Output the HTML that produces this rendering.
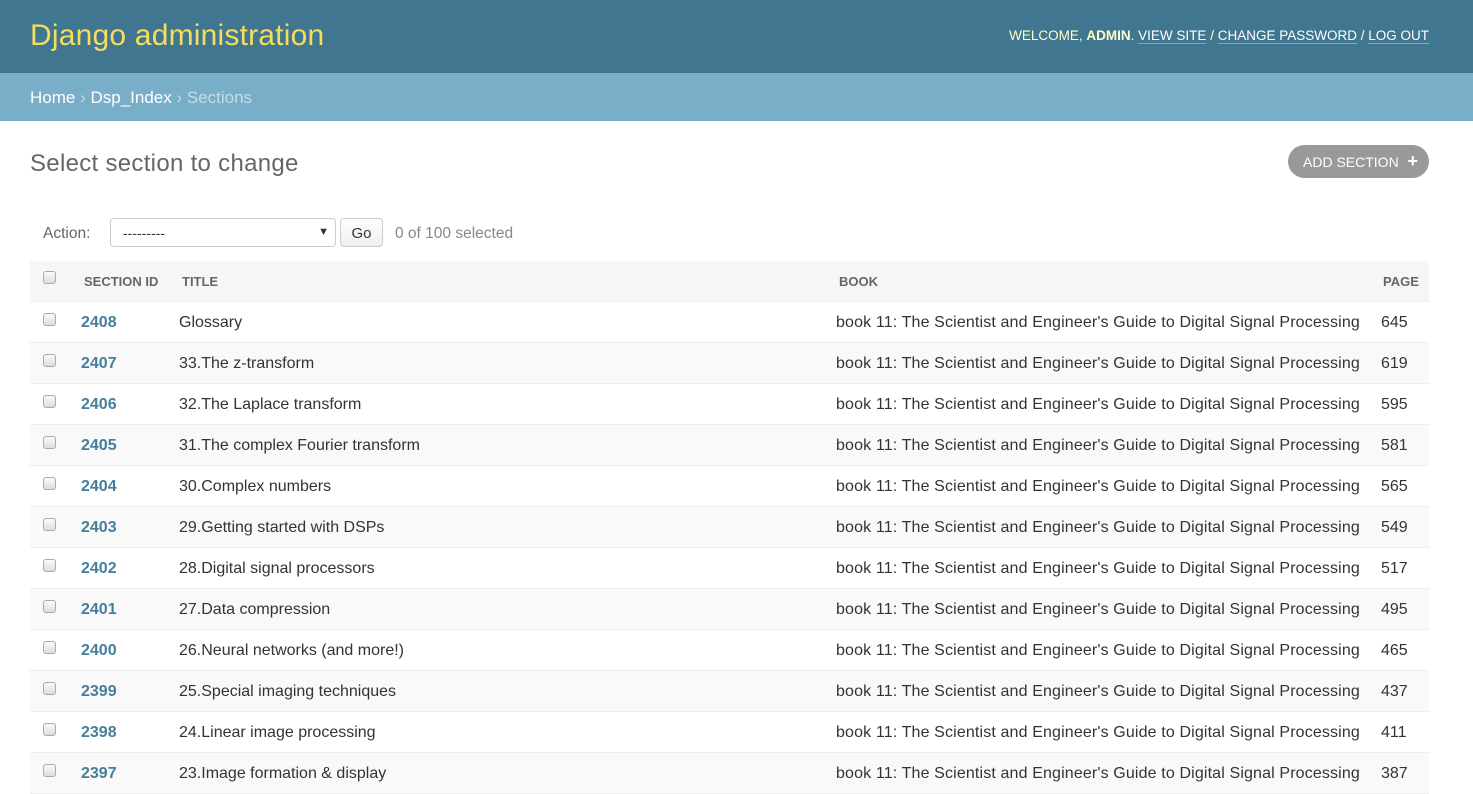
<!DOCTYPE html>
<html><head><meta charset="utf-8"><style>
*{box-sizing:border-box}
body{margin:0;width:1473px;height:777px;overflow:hidden;background:#fff;font-family:"Liberation Sans",Arial,sans-serif;color:#333;position:relative}
.hdr{position:absolute;left:0;top:0;width:1473px;height:73px;background:#417690}
.brand{position:absolute;left:30px;top:19px;font-size:30px;color:#f5dd5d;font-weight:normal;letter-spacing:0.2px}
.tools{position:absolute;right:44px;top:28px;font-size:13.5px;color:#ffc;letter-spacing:0}
.tools a{color:#fff;border-bottom:1px solid rgba(255,255,255,.35);text-decoration:none}
.tools b{color:#ffc}
.bc{position:absolute;left:0;top:73px;width:1473px;height:48px;background:#79aec8;color:#c4dce8;font-size:17px;padding:15px 30px}
.bc span{color:#fff}
h1{position:absolute;left:30px;top:150px;margin:0;font-weight:300;font-size:24px;color:#666;letter-spacing:0.3px}
.add{position:absolute;left:1288px;top:145px;width:141px;height:33px;border-radius:17px;background:#999;color:#fff;font-size:14px;padding:9px 0 0 15px}
.add i{position:absolute;right:11px;top:9px;font-style:normal;font-weight:bold;font-size:18px;line-height:14px}
.act{position:absolute;left:43px;top:225px;font-size:15.5px;color:#666}
.sel{position:absolute;left:110px;top:218px;width:226px;height:29px;border:1px solid #ccc;border-radius:4px;font-size:14px;padding:6px 12px;color:#333}
.sel i{position:absolute;right:6px;top:7px;font-style:normal;font-size:11px}
.go{position:absolute;left:340px;top:218px;width:43px;height:29px;border:1px solid #ccc;border-radius:4px;background:linear-gradient(#fff,#eee);font-size:15px;padding:6px 0;text-align:center}
.cnt{position:absolute;left:395px;top:225px;font-size:15.5px;color:#888}
.row{position:absolute;left:30px;width:1399px;height:41px;border-bottom:1px solid #eee;font-size:16px}
.row div{position:absolute;top:12px;white-space:nowrap}
.th{background:#f6f6f6;top:261px;font-size:13px;font-weight:bold;color:#666}
.th div{top:13px}
.cb{width:13px;height:13px;border:1px solid #aaa;border-radius:3px;background:linear-gradient(#fafafa,#ddd);top:11px!important;left:13px}
.id{left:51px;font-weight:bold;color:#447e9b}
.t{left:149px}.b{left:806px;letter-spacing:0.14px}.p{left:1351px}
.alt{background:#f9f9f9}
</style></head><body>
<div class="hdr"><div class="brand">Django administration</div>
<div class="tools">WELCOME, <b>ADMIN</b>. <a>VIEW SITE</a> / <a>CHANGE PASSWORD</a> / <a>LOG OUT</a></div></div>
<div class="bc"><span>Home</span> › <span>Dsp_Index</span> › Sections</div>
<h1>Select section to change</h1>
<div class="add">ADD SECTION<i>+</i></div>
<div class="act">Action:</div>
<div class="sel">---------<i>▼</i></div>
<div class="go">Go</div>
<div class="cnt">0 of 100 selected</div>
<div class="row th"><div class="cb" style="top:10px!important"></div><div style="left:54px">SECTION ID</div><div style="left:152px">TITLE</div><div style="left:809px">BOOK</div><div style="left:1353px">PAGE</div></div>
<div class="row" style="top:302px"><div class="cb"></div><div class="id">2408</div><div class="t">Glossary</div><div class="b">book 11: The Scientist and Engineer's Guide to Digital Signal Processing</div><div class="p">645</div></div>
<div class="row alt" style="top:343px"><div class="cb"></div><div class="id">2407</div><div class="t">33.The z-transform</div><div class="b">book 11: The Scientist and Engineer's Guide to Digital Signal Processing</div><div class="p">619</div></div>
<div class="row" style="top:384px"><div class="cb"></div><div class="id">2406</div><div class="t">32.The Laplace transform</div><div class="b">book 11: The Scientist and Engineer's Guide to Digital Signal Processing</div><div class="p">595</div></div>
<div class="row alt" style="top:425px"><div class="cb"></div><div class="id">2405</div><div class="t">31.The complex Fourier transform</div><div class="b">book 11: The Scientist and Engineer's Guide to Digital Signal Processing</div><div class="p">581</div></div>
<div class="row" style="top:466px"><div class="cb"></div><div class="id">2404</div><div class="t">30.Complex numbers</div><div class="b">book 11: The Scientist and Engineer's Guide to Digital Signal Processing</div><div class="p">565</div></div>
<div class="row alt" style="top:507px"><div class="cb"></div><div class="id">2403</div><div class="t">29.Getting started with DSPs</div><div class="b">book 11: The Scientist and Engineer's Guide to Digital Signal Processing</div><div class="p">549</div></div>
<div class="row" style="top:548px"><div class="cb"></div><div class="id">2402</div><div class="t">28.Digital signal processors</div><div class="b">book 11: The Scientist and Engineer's Guide to Digital Signal Processing</div><div class="p">517</div></div>
<div class="row alt" style="top:589px"><div class="cb"></div><div class="id">2401</div><div class="t">27.Data compression</div><div class="b">book 11: The Scientist and Engineer's Guide to Digital Signal Processing</div><div class="p">495</div></div>
<div class="row" style="top:630px"><div class="cb"></div><div class="id">2400</div><div class="t">26.Neural networks (and more!)</div><div class="b">book 11: The Scientist and Engineer's Guide to Digital Signal Processing</div><div class="p">465</div></div>
<div class="row alt" style="top:671px"><div class="cb"></div><div class="id">2399</div><div class="t">25.Special imaging techniques</div><div class="b">book 11: The Scientist and Engineer's Guide to Digital Signal Processing</div><div class="p">437</div></div>
<div class="row" style="top:712px"><div class="cb"></div><div class="id">2398</div><div class="t">24.Linear image processing</div><div class="b">book 11: The Scientist and Engineer's Guide to Digital Signal Processing</div><div class="p">411</div></div>
<div class="row alt" style="top:753px"><div class="cb"></div><div class="id">2397</div><div class="t">23.Image formation &amp; display</div><div class="b">book 11: The Scientist and Engineer's Guide to Digital Signal Processing</div><div class="p">387</div></div>
</body></html>
